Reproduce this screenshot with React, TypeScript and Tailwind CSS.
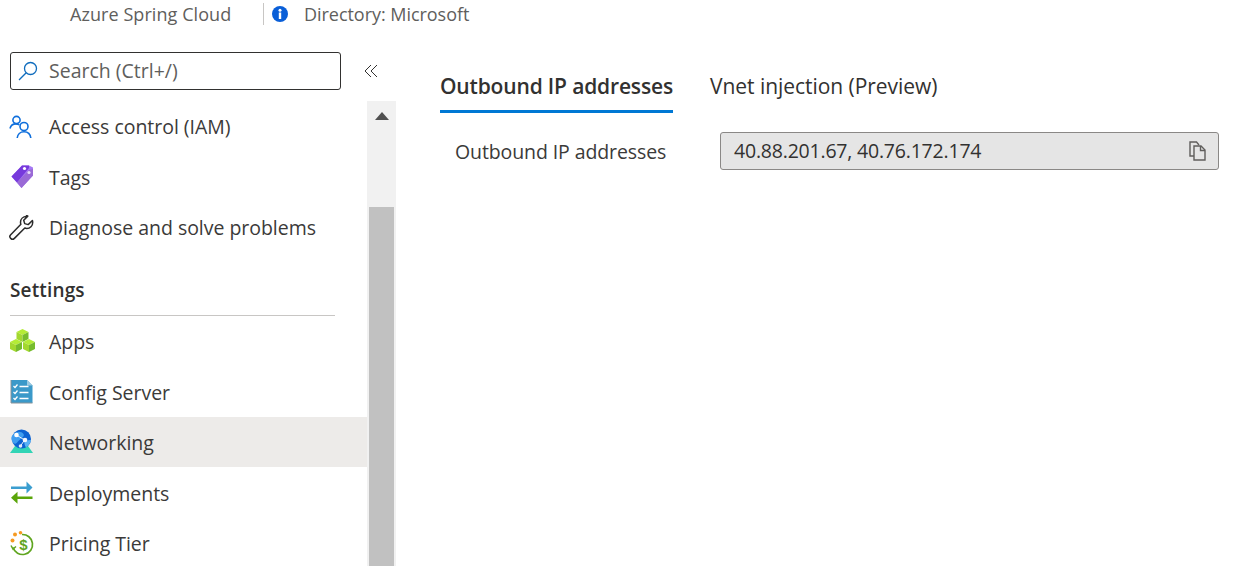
import React from "react";

const font = { fontFamily: '"Open Sans", "Noto Sans", sans-serif' };

function AccessIcon() {
  return (
    <svg width="26" height="26" viewBox="0 0 26 26" fill="none" stroke="#0f6fdc" strokeWidth="1.6">
      <circle cx="7.5" cy="6" r="3.6" />
      <path d="M1 14.5c.6-2.6 2.6-4.6 6-4.6 1.3 0 2.4.3 3.3.8" />
      <circle cx="15" cy="12.5" r="4" />
      <path d="M8.2 24c.3-3.7 3-6.3 6.8-6.3s6.4 2.6 6.8 6.3" />
    </svg>
  );
}
function TagIcon() {
  return (
    <svg width="26" height="26" viewBox="0 0 26 26">
      <path d="M2.500 12.500 L13 1.500 h7 l4 2 v8 L12.500 24 Z" fill="#a67af4" />
      <path d="M2.500 12.500 L13 1.500 h7 L20 4 L8 18.500 Z" fill="#773adc" />
      <path d="M8 18.500 L20 6 l4 -1 v6.500 L12.500 24 Z" fill="#9a6ad6" />
      <circle cx="15.500" cy="4.500" r="1.600" fill="#fff" />
      <circle cx="20" cy="8.500" r="1.600" fill="#e8dcfa" />
    </svg>
  );
}
function WrenchIcon() {
  return (
    <svg width="26" height="26" viewBox="0 0 26 26" fill="none" stroke="#2b2b2b" strokeWidth="1.5" strokeLinejoin="round">
      <path d="M17.500 1.500c-3.600 0-6 2.600-6 5.800 0 .8.100 1.400.4 2L1.700 19.700c-1 1-1 2.700 0 3.700s2.700 1 3.700 0L15.800 13c.7.300 1.300.4 2 .4 3.300 0 5.900-2.600 5.900-6 0-.7-.1-1.300-.3-1.900l-4.200 4.100-3.500-1-1-3.400 4.100-4.100c-.6-.4-1.200-.6-1.300-.6Z" />
    </svg>
  );
}
function Cube({ x, y, c }: { x: number; y: number; c: [string, string, string] }) {
  return (
    <g transform={`translate(${x} ${y})`}>
      <path d="M0 3 L6 0 L12 3 L6 6 Z" fill={c[0]} />
      <path d="M0 3 L6 6 V13 L0 10 Z" fill={c[1]} />
      <path d="M12 3 L6 6 V13 L12 10 Z" fill={c[2]} />
    </g>
  );
}
function AppsIcon() {
  const c: [string, string, string] = ["#b4ec36", "#a3d82f", "#76bc2d"];
  return (
    <svg width="26" height="26" viewBox="0 0 26 26">
      <Cube x={7.5} y={0} c={c} />
      <Cube x={1} y={10} c={c} />
      <Cube x={14} y={10} c={c} />
    </svg>
  );
}
function ConfigIcon() {
  return (
    <svg width="26" height="26" viewBox="0 0 26 26" fill="none">
      <path d="M2 1h16l5.500 5.500V24H2Z" fill="#3b99c9" />
      <path d="M18 1l5.500 5.500H18Z" fill="#9cc9e0" />
      <path d="M2 1V24H23.500" stroke="#8a9298" strokeWidth="1" />
      <g stroke="#fff" strokeWidth="1.300">
        <path d="M4.500 7l1.500 1.500 2.500-3M4.500 13l1.500 1.500 2.500-3M4.500 19l1.500 1.500 2.500-3" />
        <path d="M10.500 7.500h9M10.500 13.500h9M10.500 19.500h9" />
      </g>
    </svg>
  );
}
function NetIcon() {
  return (
    <svg width="26" height="26" viewBox="0 0 26 26">
      <path d="M1 24 L6 17 H19 L24 24 Z" fill="#32d4b5" />
      <circle cx="12.500" cy="10" r="9.500" fill="#0c62d2" />
      <path d="M4.500 5c3-3 8-3 10 0s-4 5-6 8-4 2-5.500-1S2.500 7 4.500 5Z" fill="#3f9df0" />
      <path d="M15.500 12c2-1 5-1 6.500-1-.5 3-2.500 6-5 7.500-1.500-2-2-5-1.500-6.500Z" fill="#5ab2f5" />
      <path d="M7.500 6 L15.500 11 L11.500 17" stroke="#e4eefc" strokeWidth="1" fill="none" />
      <circle cx="7.500" cy="6" r="2.300" fill="#fff" />
      <circle cx="16" cy="11" r="2.300" fill="#f2f6fd" />
      <circle cx="11.500" cy="17" r="1.800" fill="#dfe9fa" />
    </svg>
  );
}
function DeployIcon() {
  return (
    <svg width="26" height="26" viewBox="0 0 26 26">
      <path d="M2 6.500h15.500V1.500L23.500 7.500l-6 6V8.900H2Z" fill="#3b9ed0" />
      <path d="M23.500 16.500H8.500V11.800L2 17.700l6.500 6V19H23.500Z" fill="#5aa50a" />
    </svg>
  );
}
function PricingIcon() {
  return (
    <svg width="26" height="26" viewBox="0 0 26 26" fill="none">
      <path d="M13 3.500a10 10 0 1 1-9 13" stroke="#5fa51f" strokeWidth="1.700" />
      <path d="M2 14.500l2 3.500 3-2.500" stroke="#5fa51f" strokeWidth="1.500" />
      <circle cx="3.500" cy="9.500" r="2" fill="#f59a23" />
      <circle cx="6" cy="3.500" r="2" fill="#f59a23" />
      <circle cx="11.500" cy="1.800" r="1.800" fill="#f59a23" />
      <text x="14.500" y="19" textAnchor="middle" fontSize="15" fontWeight="700" fill="#5fa51f" style={{ fontFamily: '"Liberation Sans", sans-serif' }}>$</text>
    </svg>
  );
}

function Row({ icon, label, active, h }: { icon: React.ReactNode; label: string; active?: boolean; h: string }) {
  return (
    <div className={`flex items-center pl-[9px] ${h} ${active ? "bg-[#edebe9]" : ""}`}>
      <span className="w-[26px] h-[26px] shrink-0 flex">{icon}</span>
      <span className="ml-[14px] pt-[1px] text-[19.500px] tracking-[-0.030px] text-[#3b3a39]">{label}</span>
    </div>
  );
}

export default function App() {
  return (
    <div className="w-[1235px] h-[566px] overflow-hidden bg-white flex flex-col" style={font}>
      <div className="h-[28px] flex items-center shrink-0 text-[18px] text-[#605e5c]">
        <span className="ml-[70px] w-[193px] tracking-[0.070px]">Azure Spring Cloud</span>
        <span className="w-px h-[22px] bg-[#c8c6c4]" />
        <svg className="ml-[8px]" width="16" height="16" viewBox="0 0 16 16">
          <circle cx="8" cy="8" r="8" fill="#0a5fd8" />
          <rect x="6.800" y="6.500" width="2.400" height="6.500" fill="#fff" />
          <circle cx="8" cy="4.300" r="1.500" fill="#fff" />
        </svg>
        <span className="ml-[16px] tracking-[-0.040px]">Directory: Microsoft</span>
      </div>
      <div className="flex flex-1 min-h-0">
        <div className="w-[396px] shrink-0 flex flex-col min-h-0">
          <div className="flex items-start pt-[24px] pl-[10px] h-[73px] shrink-0">
            <div className="w-[331px] h-[38px] border border-[#323130] rounded-[3px] flex items-center pl-[7px]">
              <svg width="20" height="20" viewBox="0 0 20 20" fill="none" stroke="#0f6cbd" strokeWidth="1.300">
                <circle cx="12.500" cy="7.500" r="6" />
                <path d="M8.200 11.800 L1 19" />
              </svg>
              <span className="ml-[11px] text-[19.500px] tracking-[0px] text-[#605e5c]">Search (Ctrl+/)</span>
            </div>
            <svg className="ml-[23px] mt-[12px]" width="14" height="14" viewBox="0 0 14 14" fill="none" stroke="#323130" strokeWidth="1">
              <path d="M7 1 L1 7 L7 13M13 1 L7 7 L13 13" />
            </svg>
          </div>
          <div className="flex flex-1 min-h-0">
            <div className="w-[367px] shrink-0 overflow-hidden">
              <Row icon={<AccessIcon />} label="Access control (IAM)" h="h-[49px] mt-px" />
              <Row icon={<TagIcon />} label="Tags" h="h-[52px]" />
              <Row icon={<WrenchIcon />} label="Diagnose and solve problems" h="h-[49px]" />
              <div className="h-[64px] ml-[10px] w-[325px] border-b border-[#c8c6c4] flex items-end pb-[11px] text-[19px] tracking-[0.150px] font-semibold text-[#323130]">
                Settings
              </div>
              <Row icon={<AppsIcon />} label="Apps" h="h-[51px]" />
              <Row icon={<ConfigIcon />} label="Config Server" h="h-[50px]" />
              <Row icon={<NetIcon />} label="Networking" active h="h-[50px]" />
              <Row icon={<DeployIcon />} label="Deployments" h="h-[52px]" />
              <Row icon={<PricingIcon />} label="Pricing Tier" h="h-[49px]" />
            </div>
            <div className="w-[29px] shrink-0 bg-[#f1f1f1] flex flex-col">
              <div className="h-[106px] shrink-0 flex justify-center pt-[11px]">
                <div className="w-0 h-0 border-l-[7px] border-r-[7px] border-b-[8px] border-l-transparent border-r-transparent border-b-[#505050]" />
              </div>
              <div className="flex-1 bg-[#c1c1c1] mx-[2px]" />
            </div>
          </div>
        </div>
        <div className="flex-1 min-w-0 pl-[44px] pt-[38px]">
          <div className="flex gap-[37px] h-[47px]">
            <div className="h-[47px] pt-[5px] border-b-[3px] border-[#0078d4] text-[21px] tracking-[-0.160px] font-semibold text-[#323130]">
              Outbound IP addresses
            </div>
            <div className="pt-[5px] text-[21px] tracking-[-0.040px] text-[#323130]">Vnet injection (Preview)</div>
          </div>
          <div className="flex items-center mt-[19px]">
            <div className="w-[280px] pl-[15px] pt-[1px] text-[19.500px] tracking-[-0.100px] text-[#3b3a39]">Outbound IP addresses</div>
            <div className="w-[499px] h-[38px] bg-[#e5e5e5] border border-[#8a8886] rounded-[3px] flex items-center justify-between pl-[13px] pr-[11px]">
              <span className="text-[19.500px] tracking-[-0.200px] text-[#323130]">40.88.201.67, 40.76.172.174</span>
              <svg width="18" height="20" viewBox="0 0 18 20" fill="none" stroke="#605e5c" strokeWidth="1.400">
                <path d="M5 15H1V1h6.500L10 4" />
                <path d="M5 5h7l4 4v10H5Z" />
                <path d="M11.500 5v4.500H16" />
              </svg>
            </div>
          </div>
        </div>
      </div>
    </div>
  );
}
